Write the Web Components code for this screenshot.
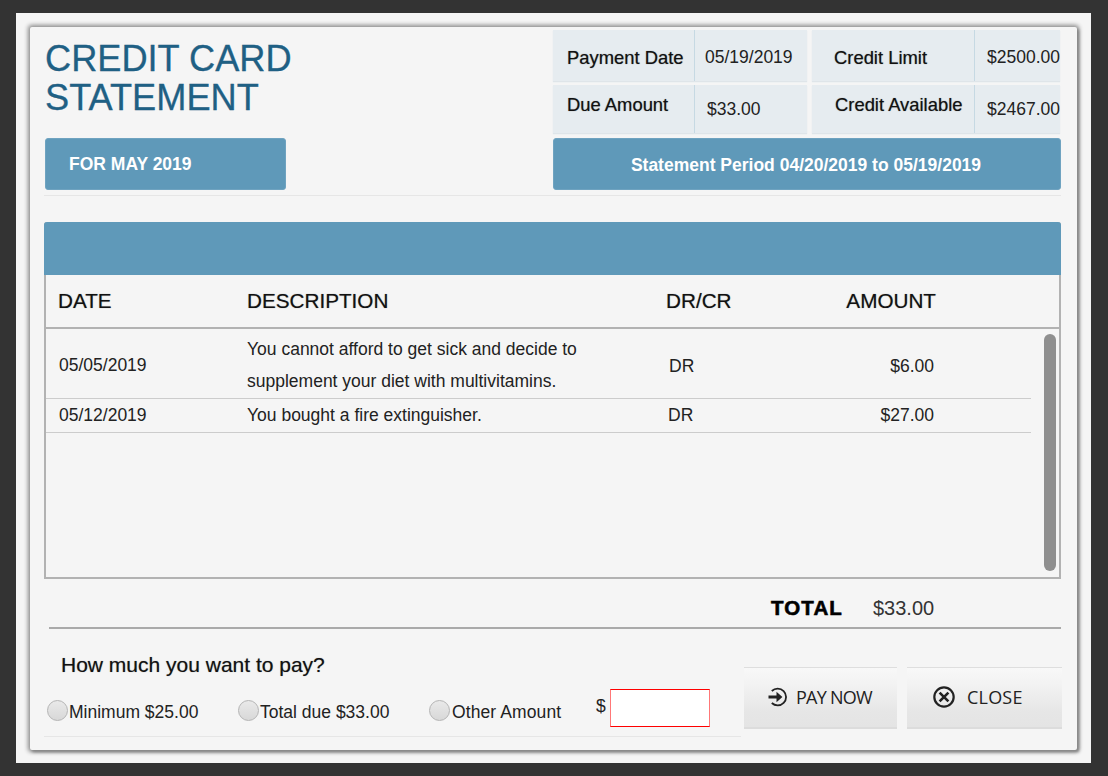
<!DOCTYPE html>
<html>
<head>
<meta charset="utf-8">
<title>Credit Card Statement</title>
<style>
    html, body { margin: 0; height: 776px; overflow: hidden; }
    body {
        background: #333;
        font-family: "Liberation Sans", Arial, sans-serif;
        color: #222;
        padding: 13px 17px 13px 16px;
        box-sizing: border-box;
    }
</style>
</head>
<body>
<cc-statement>
    <cc-banner slot="month" align="left">FOR MAY 2019</cc-banner>
    <cc-banner slot="period">Statement Period 04/20/2019 to 05/19/2019</cc-banner>
    <cc-table slot="table">
        <cc-row date="05/05/2019" type="DR" amount="$6.00" style="--row-h: 68px; --type-x: 1px; --y: 3px; --y-end: 5px">You cannot afford to get sick and decide to<br>supplement your diet with multivitamins.</cc-row>
        <cc-row date="05/12/2019" type="DR" amount="$27.00" style="--row-h: 33px">You bought a fire extinguisher.</cc-row>
    </cc-table>
    <cc-radio slot="options">Minimum $25.00</cc-radio>
    <cc-radio slot="options">Total due $33.00</cc-radio>
    <cc-radio slot="options" style="--gap: 2px; letter-spacing: .1px">Other Amount</cc-radio>
    <cc-button slot="actions" icon="go" style="--btn-w: 153px; --icon-gap: 9px; --pad: 23px; --size: 20px; --ls: -.75px">PAY NOW</cc-button>
    <cc-button slot="actions" icon="close" style="--btn-w: 155px; --icon-gap: 12px; --pad: 26px; --size: 22px; --ls: .2px">CLOSE</cc-button>
</cc-statement>

<script>
class Statement extends HTMLElement {
    constructor () {
        super();
        this.attachShadow( { mode: "open" } );
        this.shadowRoot.innerHTML = `
            <style>
                :host {
                    display: block;
                    height: 750px;
                    background: #f5f5f5;
                    padding: 14px 14px 13px 14px;
                    box-sizing: border-box;
                }
                #card {
                    height: 100%;
                    box-sizing: border-box;
                    padding: 3px 15px 0 14px;
                    background: #f5f5f5;
                    box-shadow: 0 0 4px 2px #8c8c8c, 2px 2px 3px #777;
                    border-radius: 2px;
                }
                #top {
                    display: grid;
                    grid-template-columns: 509px 508px;
                    grid-template-rows: 108px 52px;
                }
                h1 {
                    margin: 0;
                    padding: 9px 0 0 1px;
                    font: 400 36.2px/39px "Liberation Sans", Arial, sans-serif;
                    -webkit-text-stroke: .3px #1f6084;
                    color: #1f6084;
                }
                #month { display: block; width: 241px; margin-left: 1px; }
                #rule {
                    margin: 5px 1px 0 0;
                    height: 1px;
                    background: #e6e6e6;
                }
                #table { display: block; margin: 26px 1px 0 0; }
                #total {
                    display: flex;
                    align-items: center;
                    padding-top: 10px;
                    box-sizing: border-box;
                    border-bottom: 2px solid #aaa;
                    margin: 0 1px 0 5px;
                    height: 50px;
                }
                #total b {
                    margin-left: 722px;
                    width: 102px;
                    font: 700 20.5px/24px "Liberation Sans", Arial, sans-serif;
                    letter-spacing: 1.1px;
                    -webkit-text-stroke: .6px #000;
                    color: #000;
                }
                #total span { font-size: 20px; color: #333; }
                #lower { display: flex; align-items: flex-start; }
                #pay { width: 697px; margin-right: 3px; height: 108px; box-sizing: border-box; border-bottom: 1px solid #e6e6e6; }
                h2 {
                    margin: 0;
                    padding: 24px 0 0 17px;
                    font: 400 21px/24px "Liberation Sans", Arial, sans-serif;
                    color: #111;
                    text-shadow: 0 0 1px rgba(0, 0, 0, .45);
                }
                #options {
                    display: grid;
                    grid-template-columns: 191px 191px 167px 14px 100px;
                    grid-template-rows: 21px;
                    align-items: center;
                    padding: 23px 0 0 3px;
                }
                #dollar {
                    align-self: start;
                    margin-top: -4px;
                    font-size: 17.5px;
                    line-height: 20px;
                }
                #amount {
                    align-self: start;
                    width: 100px;
                    height: 38px;
                    box-sizing: border-box;
                    background: #fff;
                    border: 1px solid #f00;
                    border-left-color: #f77;
                    border-right-color: #f77;
                    margin-top: -11px;
                }
                #actions { display: flex; gap: 10px; padding-top: 38px; }
            </style>
            <div id="card">
                <div id="top">
                    <h1>CREDIT CARD<br>STATEMENT</h1>
                    <cc-info>
                        <cc-cell label="Payment Date" value="05/19/2019" style="--label-w: 142px; --value-w: 112px; --pad: 14px; --val-pad: 10px; --lab-t: 4px; --val-y: 4px"></cc-cell>
                        <cc-cell label="Credit Limit" value="$2500.00" style="--label-w: 163px; --value-w: 85px; --pad: 22px; --val-pad: 12px; --lab-t: 4px; --val-y: 4px"></cc-cell>
                        <cc-cell label="Due Amount" value="$33.00" style="--label-w: 142px; --value-w: 112px; --pad: 14px; --val-pad: 12px; --val-y: 1px; --lab-b: 8px"></cc-cell>
                        <cc-cell label="Credit Available" value="$2467.00" style="--label-w: 163px; --value-w: 85px; --pad: 23px; --val-pad: 12px; --val-y: 1px; --lab-b: 8px"></cc-cell>
                    </cc-info>
                    <slot name="month" id="month"></slot>
                    <slot name="period"></slot>
                </div>
                <div id="rule"></div>
                <slot name="table" id="table"></slot>
                <div id="total"><b>TOTAL</b><span>$33.00</span></div>
                <div id="lower">
                    <div id="pay">
                        <h2>How much you want to pay?</h2>
                        <div id="options">
                            <slot name="options" style="display: contents"></slot>
                            <span id="dollar">$</span>
                            <div id="amount"></div>
                        </div>
                    </div>
                    <div id="actions"><slot name="actions" style="display: contents"></slot></div>
                </div>
            </div>
        `;
    }
}
customElements.define( "cc-statement", Statement );

class Info extends HTMLElement {
    constructor () {
        super();
        this.attachShadow( { mode: "open" } );
        this.shadowRoot.innerHTML = `
            <style>
                :host {
                    display: grid;
                    grid-template-columns: 254px 248px;
                    grid-template-rows: 51px 48px;
                    column-gap: 5px;
                    row-gap: 4px;
                    width: 507px;
                }
            </style>
            <slot></slot>
        `;
    }
}
customElements.define( "cc-info", Info );

class Cell extends HTMLElement {
    constructor () {
        super();
        this.attachShadow( { mode: "open" } );
        this.shadowRoot.innerHTML = `
            <style>
                :host {
                    display: flex;
                    background: #e6ecf0;
                    box-shadow: 0 1px 1px #dfe5e9, 0 2px 0 #f2f4f5;
                    font-size: 17.5px;
                    color: #222;
                }
                #label {
                    width: var(--label-w);
                    box-sizing: border-box;
                    padding: var(--lab-t, 0) 0 var(--lab-b, 0) var(--pad);
                    display: flex;
                    align-items: center;
                    white-space: nowrap;
                    font-size: 18.4px;
                    color: #111;
                    border-right: 1px solid #c6d9e3;
                    text-shadow: 0 0 1px rgba(0, 0, 0, .5);
                }
                #value {
                    width: var(--value-w);
                    box-sizing: border-box;
                    padding: var(--val-y, 0) 0 0 var(--val-pad);
                    display: flex;
                    align-items: center;
                    white-space: nowrap;
                }
            </style>
            <div id="label"></div>
            <div id="value"></div>
        `;
    }

    connectedCallback() {
        this.shadowRoot.getElementById( "label" ).textContent = this.getAttribute( "label" );
        this.shadowRoot.getElementById( "value" ).textContent = this.getAttribute( "value" );
    }
}
customElements.define( "cc-cell", Cell );

class Banner extends HTMLElement {
    constructor () {
        super();
        this.attachShadow( { mode: "open" } );
        this.shadowRoot.innerHTML = `
            <style>
                :host {
                    display: flex;
                    align-items: center;
                    justify-content: center;
                    height: 52px;
                    box-sizing: border-box;
                    padding: 2px 2px 0 0;
                    background: #5f99b9;
                    border: 1px solid #6fa3c0;
                    border-radius: 3px;
                    color: #fff;
                    font-weight: 700;
                    font-size: 17.5px;
                }
                :host([align="left"]) {
                    justify-content: flex-start;
                    padding: 1px 0 0 23px;
                }
            </style>
            <slot></slot>
        `;
    }
}
customElements.define( "cc-banner", Banner );

class Table extends HTMLElement {
    constructor () {
        super();
        this.attachShadow( { mode: "open" } );
        this.shadowRoot.innerHTML = `
            <style>
                :host {
                    display: block;
                    height: 357px;
                    box-sizing: border-box;
                    border: 2px solid #b2b2b2;
                    border-top: 0;
                    border-radius: 3px 3px 0 0;
                    position: relative;
                }
                #bar {
                    height: 53px;
                    margin: 0 -2px;
                    background: #5f99b9;
                    border-radius: 3px 3px 0 0;
                }
                #head {
                    display: grid;
                    grid-template-columns: 189px 419px 121px 149px;
                    height: 54px;
                    box-sizing: border-box;
                    align-items: center;
                    padding-left: 12px;
                    border-bottom: 2px solid #b2b2b2;
                    font-size: 20.7px;
                    color: #111;
                    text-shadow: 0 0 1px rgba(0, 0, 0, .45);
                }
                #head span:last-child { text-align: right; }
                #rows { padding-top: 1px; width: 985px; }
                #thumb {
                    position: absolute;
                    right: 3px;
                    top: 112px;
                    width: 12px;
                    height: 237px;
                    border-radius: 6px;
                    background: #8f8f8f;
                }
            </style>
            <div id="bar"></div>
            <div id="head">
                <span>DATE</span><span>DESCRIPTION</span><span>DR/CR</span><span>AMOUNT</span>
            </div>
            <div id="rows"><slot></slot></div>
            <div id="thumb"></div>
        `;
    }
}
customElements.define( "cc-table", Table );

class Row extends HTMLElement {
    constructor () {
        super();
        this.attachShadow( { mode: "open" } );
        this.shadowRoot.innerHTML = `
            <style>
                :host {
                    display: grid;
                    grid-template-columns: 188px 421px 120px 146px;
                    align-items: center;
                    height: var(--row-h);
                    box-sizing: content-box;
                    padding-left: 13px;
                    border-bottom: 1px solid #ccc;
                    font-size: 17.5px;
                    line-height: 32px;
                    color: #222;
                }
                div { padding: var(--y, 0) 0 2px; }
                #type { padding-top: var(--y-end, 0); padding-left: var(--type-x, 0); }
                #amount { padding-top: var(--y-end, 0); text-align: right; }
            </style>
            <div id="date"></div>
            <div><slot></slot></div>
            <div id="type"></div>
            <div id="amount"></div>
        `;
    }

    connectedCallback() {
        for ( const key of [ "date", "type", "amount" ] ) {
            this.shadowRoot.getElementById( key ).textContent = this.getAttribute( key );
        }
    }
}
customElements.define( "cc-row", Row );

class Radio extends HTMLElement {
    constructor () {
        super();
        this.attachShadow( { mode: "open" } );
        this.shadowRoot.innerHTML = `
            <style>
                :host {
                    display: flex;
                    align-items: center;
                    font-size: 17.5px;
                    color: #222;
                    white-space: nowrap;
                }
                i {
                    width: 21px;
                    height: 21px;
                    flex: none;
                    box-sizing: border-box;
                    margin-right: var(--gap, 1px);
                    border-radius: 50%;
                    border: 1px solid #b4b4b4;
                    background: linear-gradient(#e9e9e9, #d8d8d8);
                }
                slot { display: block; padding-top: 4px; }
            </style>
            <i></i><slot></slot>
        `;
    }
}
customElements.define( "cc-radio", Radio );

const ICONS = {
    go: `<path d="M4.8 4A8.4 8.4 0 1 1 4.8 16" fill="none" stroke="#222" stroke-width="1.8"/>
         <path d="M1.5 8.4H9.5V4.8L15.4 10L9.5 15.2V11.6H1.5Z" fill="#222"/>`,
    close: `<circle cx="10" cy="10" r="8.8" fill="none" stroke="#222" stroke-width="2"/>
            <path d="M6 6L14 14M14 6L6 14" fill="none" stroke="#222" stroke-width="2.4"/>`
};

class Button extends HTMLElement {
    constructor () {
        super();
        this.attachShadow( { mode: "open" } );
        this.shadowRoot.innerHTML = `
            <style>
                :host {
                    display: flex;
                    align-items: center;
                    width: var(--btn-w);
                    height: 62px;
                    box-sizing: border-box;
                    padding: 0 0 2px var(--pad);
                    background: linear-gradient(#f8f8f8 0, #f3f3f3 25%, #e6e6e6 75%, #e4e4e4 100%);
                    border-top: 1px solid #dedede;
                    border-bottom: 2px solid #dcdcdc;
                    font: 400 18px "Open Sans", sans-serif;
                    letter-spacing: var(--ls);
                    color: #222;
                }
                svg { width: var(--size); height: var(--size); margin-right: var(--icon-gap); flex: none; }
            </style>
            <svg viewBox="0 0 20 20"></svg><slot></slot>
        `;
    }

    connectedCallback() {
        this.shadowRoot.querySelector( "svg" ).innerHTML = ICONS[ this.getAttribute( "icon" ) ];
    }
}
customElements.define( "cc-button", Button );
</script>
</body>
</html>
